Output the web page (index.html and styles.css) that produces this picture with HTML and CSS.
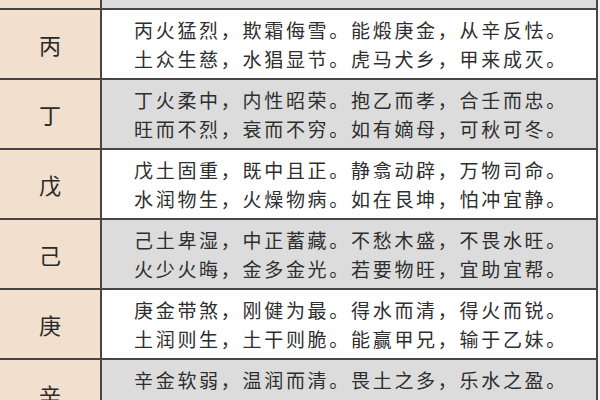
FILE: index.html
```html
<!DOCTYPE html>
<html lang="zh">
<head>
<meta charset="utf-8">
<link rel="stylesheet" href="styles.css">
</head>
<body>
<div class="table">
  <div class="row gray">
    <div class="stem">乙</div>
    <div class="verse"><p>乙木虽柔，刲羊解牛。怀丁抱丙，跨凤乘猴。</p><p>虚湿之地，骑马亦忧。藤萝系甲，可春可秋。</p></div>
  </div>
  <div class="row white">
    <div class="stem">丙</div>
    <div class="verse"><p>丙火猛烈，欺霜侮雪。能煅庚金，从辛反怯。</p><p>土众生慈，水猖显节。虎马犬乡，甲来成灭。</p></div>
  </div>
  <div class="row gray">
    <div class="stem">丁</div>
    <div class="verse"><p>丁火柔中，内性昭荣。抱乙而孝，合壬而忠。</p><p>旺而不烈，衰而不穷。如有嫡母，可秋可冬。</p></div>
  </div>
  <div class="row white">
    <div class="stem">戊</div>
    <div class="verse"><p>戊土固重，既中且正。静翕动辟，万物司命。</p><p>水润物生，火燥物病。如在艮坤，怕冲宜静。</p></div>
  </div>
  <div class="row gray">
    <div class="stem">己</div>
    <div class="verse"><p>己土卑湿，中正蓄藏。不愁木盛，不畏水旺。</p><p>火少火晦，金多金光。若要物旺，宜助宜帮。</p></div>
  </div>
  <div class="row white">
    <div class="stem">庚</div>
    <div class="verse"><p>庚金带煞，刚健为最。得水而清，得火而锐。</p><p>土润则生，土干则脆。能赢甲兄，输于乙妹。</p></div>
  </div>
  <div class="row gray">
    <div class="stem">辛</div>
    <div class="verse"><p>辛金软弱，温润而清。畏土之多，乐水之盈。</p><p>能扶社稷，能救生灵。热则喜母，寒则喜丁。</p></div>
  </div>
</div>
</body>
</html>
```

FILE: styles.css
```css
html, body {
  margin: 0;
  padding: 0;
  background: #f4f4f4;
  overflow: hidden;
}
body {
  width: 600px;
  height: 400px;
  font-family: "Noto Sans CJK SC", "Noto Sans", sans-serif;
}
.table {
  width: 596px;
  margin-top: -60px;
  border-right: 2px solid #4a4444;
}
.row {
  display: flex;
  height: 68px;
  border-bottom: 2px solid #4a4444;
}
.stem {
  width: 100px;
  flex: none;
  background: #f1e0cd;
  border-right: 2px solid #4a4444;
  display: flex;
  align-items: center;
  justify-content: center;
  font-size: 22px;
  color: #2a2a2a;
}
.verse {
  flex: 1;
  display: flex;
  flex-direction: column;
  justify-content: center;
  align-items: center;
  padding-left: 4px;
  font-size: 19px;
  letter-spacing: 2.7px;
  color: #2e2e2e;
}
.verse p {
  margin: 0;
  line-height: 29px;
  white-space: nowrap;
}
.gray .verse { background: #dcdcdc; }
.white .verse { background: #ffffff; }
```
